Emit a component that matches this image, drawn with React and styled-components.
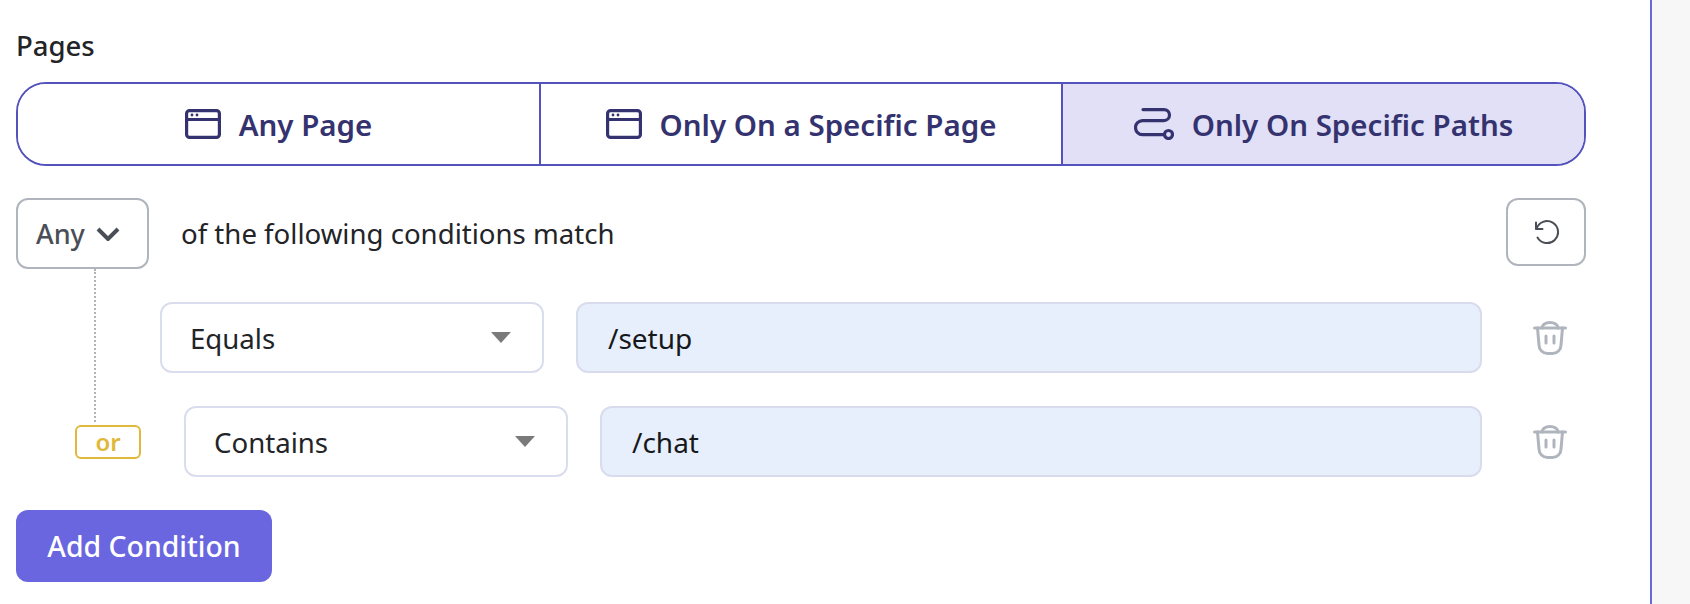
import React from 'react';
import styled, { createGlobalStyle } from 'styled-components';

const Global = createGlobalStyle`
  html, body { margin: 0; padding: 0; background: #fff; }
  * { box-sizing: border-box; }
`;

const Page = styled.div`
  display: flex;
  width: 1690px;
  height: 604px;
  overflow: hidden;
  font-family: "Noto Sans", "Open Sans", sans-serif;
  color: #222428;
`;
const Main = styled.main`
  width: 1652px;
  flex: none;
  padding: 31px 64px 0 16px;
  border-right: 2px solid #6b68dc;
  background: #fff;
`;
const Aside = styled.aside`
  flex: 1;
  background: #f7f7f8;
`;
const Label = styled.div`
  height: 30px;
  line-height: 30px;
  font-size: 27.5px;
  font-weight: 500;
  margin-bottom: 21px;
`;
const Segments = styled.div`
  display: grid;
  grid-template-columns: 521px 522px 1fr;
  height: 84px;
  border: 2px solid #5452bd;
  border-radius: 30px;
  overflow: hidden;
  margin-bottom: 32px;
`;
const Segment = styled.div`
  display: flex;
  align-items: center;
  justify-content: center;
  gap: 18px;
  font-size: 29.5px;
  font-weight: 600;
  color: #35336f;
  background: ${p => (p.$active ? '#e1e0f7' : '#fff')};
  & + & { border-left: 2px solid #5452bd; }
`;
const Header = styled.div`
  position: relative;
  display: flex;
  align-items: flex-start;
  height: 71px;
  margin-bottom: 33px;
`;
const AnySelect = styled.div`
  width: 133px;
  height: 71px;
  flex: none;
  display: flex;
  align-items: center;
  gap: 11px;
  padding-left: 18px;
  border: 2px solid #b0b5bd;
  border-radius: 12px;
  font-size: 27px;
  font-weight: 500;
  color: #4a4f57;
  background: #fff;
`;
const HeaderText = styled.div`
  flex: 1;
  height: 71px;
  line-height: 71px;
  margin-left: 32px;
  font-size: 27.6px;
`;
const ResetButton = styled.div`
  width: 80px;
  height: 68px;
  display: flex;
  align-items: center;
  justify-content: center;
  border: 2px solid #b0b5bd;
  border-radius: 12px;
  color: #4a4f57;
`;
const Connector = styled.div`
  position: absolute;
  left: 78px;
  top: 71px;
  width: 0;
  height: 153px;
  border-left: 2px dotted #b4b4b4;
`;
const Row = styled.div`
  display: flex;
  align-items: center;
  height: 71px;
  margin-bottom: 33px;
  margin-left: ${p => p.$indent}px;
  padding-right: 19px;
`;
const OrBadge = styled.div`
  width: 66px;
  height: 34px;
  flex: none;
  margin-right: 43px;
  display: flex;
  align-items: center;
  justify-content: center;
  border: 2px solid #e0b93b;
  border-radius: 6px;
  font-size: 24px;
  font-weight: 600;
  color: #e0b93b;
`;
const Select = styled.div`
  width: 384px;
  height: 71px;
  flex: none;
  display: flex;
  align-items: center;
  justify-content: space-between;
  padding: 0 31px 0 28px;
  border: 2px solid #dadded;
  border-radius: 12px;
  font-size: 27.6px;
  background: #fff;
`;
const Caret = styled.span`
  width: 0;
  height: 0;
  margin-top: 0;
  border-left: 10px solid transparent;
  border-right: 10px solid transparent;
  border-top: 11px solid #7a7a7a;
`;
const PathInput = styled.div`
  flex: 1;
  height: 71px;
  display: flex;
  align-items: center;
  margin-left: 32px;
  padding-left: 30px;
  border: 2px solid #d8dcec;
  border-radius: 12px;
  font-size: 28px;
  color: #16181c;
  background: #e8effc;
`;
const TrashSlot = styled.div`
  width: 34px;
  height: 34px;
  flex: none;
  margin-left: 51px;
  color: #b0b5bd;
`;
const AddButton = styled.div`
  width: 256px;
  height: 72px;
  display: flex;
  align-items: center;
  justify-content: center;
  border-radius: 12px;
  background: #6966e0;
  color: #fff;
  font-size: 28.4px;
  font-weight: 500;
`;

const BrowserIcon = () => (
  <svg width="36" height="30" viewBox="0 0 36 30" fill="none" stroke="#35336f" strokeWidth="3.2">
    <rect x="1.6" y="1.6" width="32.8" height="26.8" rx="3" />
    <path d="M1.5 10.5h33" />
    <circle cx="7" cy="6" r="1.4" fill="#35336f" stroke="none" />
    <circle cx="12" cy="6" r="1.4" fill="#35336f" stroke="none" />
  </svg>
);
const PathIcon = () => (
  <svg width="40" height="32" viewBox="0 0 40 32" fill="none" stroke="#35336f" strokeWidth="3.2" strokeLinecap="round">
    <path d="M9 1.6h21a5.5 5.5 0 0 1 0 11H8.5a7 7 0 0 0 0 14H30" />
    <circle cx="34.5" cy="26.5" r="4" />
  </svg>
);
const ChevronIcon = () => (
  <svg width="24" height="14" viewBox="0 0 24 14" fill="none" stroke="#4a4f57" strokeWidth="4">
    <path d="M2 2l10 10L22 2" />
  </svg>
);
const ResetIcon = () => (
  <svg width="26" height="26" viewBox="0 0 26 26" fill="none" stroke="#4a4f57" strokeWidth="2" strokeLinecap="round" strokeLinejoin="round">
    <path d="M3.5 10a11 11 0 1 1 1 8.5" />
    <path d="M3 3.5V10h6.5" />
  </svg>
);
const TrashIcon = () => (
  <svg width="34" height="34" viewBox="0 0 34 34" fill="none" stroke="currentColor" strokeWidth="3" strokeLinecap="round">
    <path d="M1.5 7h31" />
    <path d="M9 7a8 5.5 0 0 1 16 0" />
    <path d="M4.5 7l1.5 17a8.5 8.5 0 0 0 8.5 8.5h5a8.5 8.5 0 0 0 8.5-8.5l1.5-17" />
    <path d="M13 15v7M21 15v7" />
  </svg>
);

export default function App() {
  return (
    <Page>
      <Global />
      <Main>
        <Label>Pages</Label>
        <Segments>
          <Segment><BrowserIcon />Any Page</Segment>
          <Segment><BrowserIcon />Only On a Specific Page</Segment>
          <Segment $active><PathIcon />Only On Specific Paths</Segment>
        </Segments>
        <Header>
          <AnySelect>Any<ChevronIcon /></AnySelect>
          <HeaderText>of the following conditions match</HeaderText>
          <ResetButton><ResetIcon /></ResetButton>
          <Connector />
        </Header>
        <Row $indent={144}>
          <Select>Equals<Caret /></Select>
          <PathInput>/setup</PathInput>
          <TrashSlot><TrashIcon /></TrashSlot>
        </Row>
        <Row $indent={59}>
          <OrBadge>or</OrBadge>
          <Select>Contains<Caret /></Select>
          <PathInput>/chat</PathInput>
          <TrashSlot><TrashIcon /></TrashSlot>
        </Row>
        <AddButton>Add Condition</AddButton>
      </Main>
      <Aside />
    </Page>
  );
}
